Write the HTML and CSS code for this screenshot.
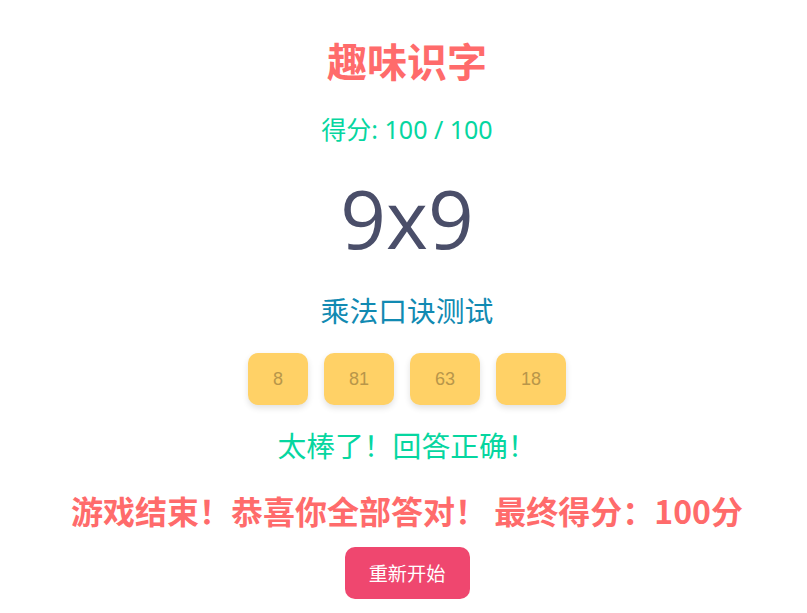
FILE: index.html
```html
<!DOCTYPE html>
<html lang="zh">
<head>
<meta charset="utf-8">
<title>趣味识字</title>
<link rel="stylesheet" href="styles.css">
</head>
<body>
<main class="game">
  <h1 class="title">趣味识字</h1>
  <div class="score">得分: 100 / 100</div>
  <div class="question">9x9</div>
  <div class="subtitle">乘法口诀测试</div>
  <div class="options">
    <button class="option">8</button>
    <button class="option">81</button>
    <button class="option">63</button>
    <button class="option">18</button>
  </div>
  <div class="feedback">太棒了！回答正确！</div>
  <div class="final">游戏结束！恭喜你全部答对！ 最终得分：100分</div>
  <button class="restart">重新开始</button>
</main>
</body>
</html>
```
FILE: styles.css
```css
html, body {
  margin: 0;
  padding: 0;
  background: #ffffff;
}
body {
  font-family: "Noto Sans", "Noto Sans CJK SC", sans-serif;
}
.game {
  display: flex;
  flex-direction: column;
  align-items: center;
  padding-top: 36px;
  padding-left: 7px;
}
.title {
  margin: 0;
  font-size: 40px;
  line-height: 48px;
  font-weight: 700;
  color: #ff6b6b;
  font-family: "Noto Sans CJK SC", sans-serif;
}
.score {
  margin-top: 29px;
  font-size: 25px;
  line-height: 32px;
  color: #06d6a0;
}
.question {
  margin-top: 25px;
  font-size: 80px;
  line-height: 96px;
  color: #4a4e69;
  font-family: "Open Sans", "Noto Sans", sans-serif;
}
.subtitle {
  margin-top: 26px;
  font-size: 28.8px;
  line-height: 36px;
  color: #118ab2;
  font-family: "Noto Sans CJK SC", sans-serif;
}
.options {
  margin-top: 25px;
  display: flex;
  gap: 16px;
}
.option {
  height: 52px;
  padding: 0 25px;
  border: none;
  border-radius: 10px;
  background: #ffd166;
  color: #b8964a;
  font-family: "Liberation Sans", Arial, sans-serif;
  font-size: 18px;
  box-shadow: 0 3px 6px rgba(0, 0, 0, 0.12);
}
.feedback {
  margin-top: 22px;
  font-size: 28.8px;
  line-height: 36px;
  color: #06d6a0;
  font-family: "Noto Sans CJK SC", sans-serif;
}
.final {
  margin-top: 27px;
  font-size: 32px;
  line-height: 40px;
  font-weight: 700;
  color: #ff6b6b;
  font-family: "Noto Sans CJK SC", sans-serif;
}
.restart {
  margin-top: 17px;
  width: 125px;
  height: 52px;
  border: none;
  border-radius: 10px;
  background: #ef476f;
  color: #ffffff;
  font-size: 19.2px;
  font-family: "Noto Sans CJK SC", sans-serif;
}
```
